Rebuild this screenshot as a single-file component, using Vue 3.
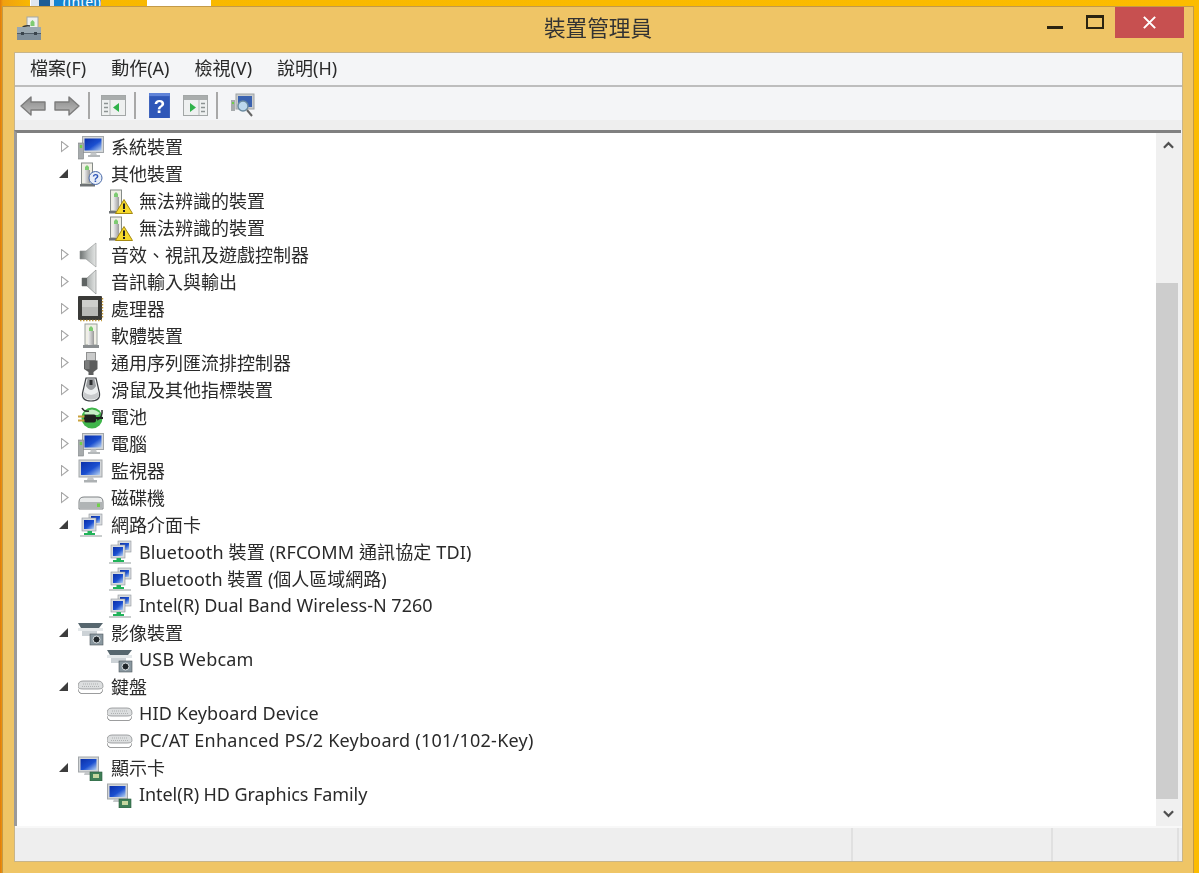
<template>
  <div class="desktop">
    <div class="thumb thumb-a"><span class="thumb-icon"></span><span class="thumb-blue">(Intel)</span></div>
    <div class="thumb thumb-b"></div>

    <svg class="defs" width="0" height="0" aria-hidden="true">
      <defs>
        <linearGradient id="screen" x1="0" y1="0" x2="1" y2="1">
          <stop offset="0" stop-color="#0a2fa8" />
          <stop offset="0.55" stop-color="#1b4fd0" />
          <stop offset="1" stop-color="#b9d4f2" />
        </linearGradient>
        <linearGradient id="metal" x1="0" y1="0" x2="1" y2="0">
          <stop offset="0" stop-color="#f2f2f2" />
          <stop offset="1" stop-color="#9a9a9a" />
        </linearGradient>
        <linearGradient id="cone" x1="0" y1="0" x2="1" y2="0">
          <stop offset="0" stop-color="#6f7473" />
          <stop offset="0.5" stop-color="#b5b9b8" />
          <stop offset="1" stop-color="#e4e6e5" />
        </linearGradient>
        <linearGradient id="arrow-fill" x1="0" y1="0" x2="0" y2="1">
          <stop offset="0" stop-color="#8a8a8a" />
          <stop offset="1" stop-color="#bdbdbd" />
        </linearGradient>
        <symbol id="i-monitor" viewBox="0 0 26 26">
          <rect x="1" y="2" width="23" height="17" fill="#d3d6d8" stroke="#a3a7aa" />
          <rect x="3" y="4" width="19" height="13" fill="url(#screen)" />
          <path d="M10 19h5l1 3H9z" fill="#c4c7c9" />
          <rect x="6" y="22" width="13" height="2.500" fill="#adb1b3" />
        </symbol>
        <symbol id="i-computer" viewBox="0 0 26 26">
          <rect x="4.500" y="2.500" width="21" height="16" fill="#d3d6d8" stroke="#a3a7aa" />
          <rect x="6.500" y="4.500" width="17" height="12" fill="url(#screen)" />
          <path d="M13 18.500h5l1 3h-7z" fill="#c4c7c9" />
          <rect x="10" y="21" width="12" height="2" fill="#b4b8ba" />
          <rect x="0.500" y="9" width="5" height="16" fill="#a7abad" stroke="#7c8082" stroke-width=".6" />
          <rect x="1.800" y="11" width="2.400" height="3" fill="#6fd04a" />
        </symbol>
        <symbol id="i-card" viewBox="0 0 26 26">
          <rect x="7" y="1" width="12" height="21" fill="#f0efe6" stroke="#9aa09c" />
          <path d="M11 5l2-2 2 2v3h-4z" fill="#7ecb72" />
          <rect x="10" y="8" width="6" height="14" fill="url(#metal)" />
          <rect x="5" y="22" width="16" height="3" fill="#8a8e90" />
        </symbol>
        <symbol id="i-unknown" viewBox="0 0 26 26">
          <rect x="3.500" y="2" width="11" height="21" fill="#f0efe6" stroke="#858b87" />
          <path d="M7 6l2-2 2 2v3H7z" fill="#7ecb72" />
          <rect x="6" y="9" width="6" height="13" fill="url(#metal)" />
          <rect x="2" y="23" width="15" height="2.500" fill="#6f7375" />
          <circle cx="17.500" cy="17" r="6.500" fill="#e8eef8" stroke="#4a6aa8" />
          <text x="17.500" y="21" text-anchor="middle" class="q">?</text>
        </symbol>
        <symbol id="i-warning" viewBox="0 0 26 26">
          <rect x="3.500" y="2" width="11" height="21" fill="#f0efe6" stroke="#858b87" />
          <path d="M7 6l2-2 2 2v3H7z" fill="#7ecb72" />
          <rect x="6" y="9" width="6" height="13" fill="url(#metal)" />
          <rect x="2" y="23" width="11" height="2.500" fill="#6f7375" />
          <path d="M17 11.500l8.500 14h-17z" fill="#f6d92c" stroke="#a58a12" />
          <rect x="16" y="15.500" width="2" height="5.500" fill="#222" />
          <rect x="16" y="22" width="2" height="2" fill="#222" />
        </symbol>
        <symbol id="i-speaker" viewBox="0 0 26 26">
          <path d="M2 9h6l10-8v24L8 17H2z" fill="url(#cone)" stroke="#8e9292" stroke-width=".6" />
        </symbol>
        <symbol id="i-speaker2" viewBox="0 0 26 26">
          <path d="M4 9h5l9-8v24l-9-8H4z" fill="url(#cone)" stroke="#7d8181" stroke-width=".6" />
          <rect x="4" y="9" width="5" height="8" fill="#5f6463" />
        </symbol>
        <symbol id="i-cpu" viewBox="0 0 26 26">
          <rect x="0" y="0" width="24" height="24" rx="1" fill="#3a3a38" />
          <rect x="4" y="4" width="16" height="16" fill="#b8b9b7" />
          <rect x="4" y="4" width="16" height="7" fill="#cdcecc" />
          <path d="M24.500 2v21M2 24.500h22" stroke="#c2993a" stroke-dasharray="1.500 1.500" stroke-width="1.400" />
        </symbol>
        <symbol id="i-usb" viewBox="0 0 26 26">
          <rect x="8.500" y="2.500" width="9" height="8" fill="#c9caca" stroke="#8f9090" />
          <path d="M6 10.500h13.500V19l-4 3v3h-5v-3L6 19z" fill="#5c5d5d" />
          <path d="M7 10.500h4.500V19H7z" fill="#7b7c7c" />
        </symbol>
        <symbol id="i-mouse" viewBox="0 0 26 26">
          <path d="M8 1h10l3.500 15q1 8-8.500 8-9.500 0-8.500-8z" fill="#eef0f1" stroke="#3d4044" stroke-width="1.200" />
          <path d="M9.500 2h7l1.500 7q-5 8-10 0z" fill="#9a9da0" />
          <rect x="11.500" y="3" width="3" height="5" fill="#2d2f31" />
          <path d="M6 15q7 6 14 0l1 5q-8 5-16 0z" fill="#c9cbcd" />
        </symbol>
        <symbol id="i-battery" viewBox="0 0 26 26">
          <circle cx="14" cy="14" r="10.500" fill="#3fb54a" />
          <path d="M6 9q8-7 16 0l-2 2H8z" fill="#c6eec6" />
          <path d="M4 4q2 4 7 3M24 6q1 7-5 10" stroke="#2d2f2d" stroke-width="1.500" fill="none" />
          <rect x="6" y="10.500" width="12" height="8" rx="2" fill="#1f211f" />
          <path d="M0 12.500h6.500M0 16.500h6.500" stroke="#c9a23c" stroke-width="1.800" />
          <path d="M18 14h7" stroke="#1f211f" stroke-width="2" />
        </symbol>
        <symbol id="i-disk" viewBox="0 0 26 26">
          <path d="M1 17q0-5 5-5h14q5 0 5 5v7H1z" fill="#e9ebeb" stroke="#7e8284" />
          <rect x="1.500" y="17" width="23" height="6.500" fill="#b0b4b5" />
          <rect x="19" y="18.500" width="3" height="3.500" fill="#6fd04a" />
        </symbol>
        <symbol id="i-network" viewBox="0 0 26 26">
          <rect x="11" y="2" width="13" height="11" fill="#d7dbde" stroke="#8f9499" stroke-width=".6" />
          <rect x="13" y="4" width="9" height="7" fill="url(#screen)" />
          <rect x="4" y="6" width="14" height="13" fill="#d7dbde" stroke="#8f9499" stroke-width=".6" />
          <rect x="6" y="8" width="10" height="9" fill="url(#screen)" />
          <rect x="9.500" y="19" width="4.500" height="3" fill="#22b35a" />
          <rect x="6" y="21" width="11" height="2" fill="#22b35a" />
          <rect x="2" y="23" width="22" height="2" fill="#c9cdcd" />
        </symbol>
        <symbol id="i-camera" viewBox="0 0 26 26">
          <path d="M0 3h25l-4 5H3z" fill="#56666e" />
          <rect x="0" y="8" width="25" height="3" fill="#e4e8ea" />
          <path d="M4 11h15v5H4z" fill="#ccd2d6" />
          <rect x="12" y="14" width="13" height="11" fill="#8a98a0" stroke="#4e585d" stroke-width=".6" />
          <circle cx="18.500" cy="19.500" r="3.500" fill="#20262a" stroke="#dbe1e4" />
        </symbol>
        <symbol id="i-keyboard" viewBox="0 0 26 26">
          <path d="M5 7h15q5 0 5 5.500 0 2.500-5 2.500H5q-5 0-5-2.500Q0 7 5 7z" fill="#dcdedf" stroke="#8b8e8f" stroke-width=".8" />
          <path d="M0 14.500q1 5 5 5h15q4 0 5-5v1.500q-1 4-5 4H5q-4 0-5-4z" fill="#3b3d3e" />
          <path d="M5 10h15M4 12.500h17" stroke="#aeb1b2" stroke-dasharray="1 1" />
        </symbol>
        <symbol id="i-display" viewBox="0 0 26 26">
          <rect x="0.500" y="2" width="20" height="15" fill="#d3d6d8" stroke="#a3a7aa" />
          <rect x="2.500" y="4" width="16" height="11" fill="url(#screen)" />
          <path d="M7 17h6l1 3H6z" fill="#c4c7c9" />
          <rect x="12" y="17" width="12" height="9" fill="#3f7f57" stroke="#2a5a3c" stroke-width=".6" />
          <rect x="15" y="19" width="6" height="4" fill="#c5d7a0" />
        </symbol>
      </defs>
    </svg>

    <div class="window">
      <header class="titlebar">
        <svg class="app-icon" viewBox="0 0 26 26" aria-hidden="true">
          <rect x="11" y="1" width="11" height="14" fill="#eef0ee" stroke="#a3a8a5" />
          <path d="M14.500 6l2-2 2 2v4h-4z" fill="#7ecb72" />
          <path d="M5 13q3-4 9-3" stroke="#32383c" stroke-width="1.400" fill="none" />
          <rect x="1" y="11" width="24" height="13" fill="#7f8e99" />
          <rect x="1" y="11" width="24" height="6" fill="#9aa8b0" />
          <rect x="1" y="17" width="24" height="1" fill="#4f5c66" />
          <rect x="5" y="16" width="3" height="3" fill="#39444c" />
          <rect x="18" y="16" width="3" height="3" fill="#39444c" />
        </svg>
        <div class="title">裝置管理員</div>
        <div class="winbtns">
          <span class="btn-min"></span>
          <span class="btn-max"></span>
          <span class="btn-close">
            <svg viewBox="0 0 16 16" aria-hidden="true"><path d="M2 2l12 12M14 2L2 14" /></svg>
          </span>
        </div>
      </header>

      <div class="client">
        <nav class="menubar">
          <span v-for="m in menus" :key="m" class="menu-item">{{ m }}</span>
        </nav>

        <div class="toolbar">
          <svg class="tool tool-arrow" viewBox="0 0 26 22" aria-hidden="true"><path d="M1 11L11 2v5h14v8H11v5z" fill="url(#arrow-fill)" stroke="#7c7c7c" stroke-width="1.400" stroke-linejoin="round" /></svg>
          <svg class="tool tool-arrow" viewBox="0 0 26 22" aria-hidden="true"><path d="M25 11L15 2v5H1v8h14v5z" fill="url(#arrow-fill)" stroke="#7c7c7c" stroke-width="1.400" stroke-linejoin="round" /></svg>
          <span class="sep"></span>
          <svg class="tool tool-panel" viewBox="0 0 25 21" aria-hidden="true">
            <rect x=".5" y=".5" width="24" height="20" fill="#eef0f0" stroke="#a3a7a7" />
            <rect x="1" y="1" width="23" height="4" fill="#a9adad" />
            <path d="M3 8.500h4M3 12.500h4M3 16.500h4" stroke="#8d9393" stroke-width="1.600" />
            <path d="M9 5v15" stroke="#b5b9b9" />
            <path d="M18 8v9l-6-4.500z" fill="#2fb24a" />
          </svg>
          <span class="sep"></span>
          <svg class="tool tool-help" viewBox="0 0 20 24" aria-hidden="true">
            <rect width="20" height="24" fill="#2f57b8" />
            <rect width="20" height="3" fill="#5f83d8" />
            <text x="10" y="19" text-anchor="middle" class="help-q">?</text>
          </svg>
          <svg class="tool tool-panel" viewBox="0 0 25 21" aria-hidden="true">
            <rect x=".5" y=".5" width="24" height="20" fill="#eef0f0" stroke="#a3a7a7" />
            <rect x="1" y="1" width="23" height="4" fill="#a9adad" />
            <path d="M18 8.500h4M18 12.500h4M18 16.500h4" stroke="#8d9393" stroke-width="1.600" />
            <path d="M16 5v15" stroke="#b5b9b9" />
            <path d="M7 8v9l6-4.500z" fill="#2fb24a" />
          </svg>
          <span class="sep"></span>
          <svg class="tool tool-scan" viewBox="0 0 25 25" aria-hidden="true">
            <rect x="6" y="1" width="18" height="15" fill="#c9cccd" stroke="#9ea3a6" />
            <rect x="8" y="3" width="14" height="11" fill="#3a62b0" />
            <rect x="1" y="7" width="4" height="11" fill="#a7abad" />
            <rect x="2" y="9" width="2" height="2" fill="#6fd04a" />
            <circle cx="13" cy="13" r="5" fill="#bcd8ee" stroke="#6a8aa0" stroke-width="1.400" />
            <path d="M17 17l5 6" stroke="#666" stroke-width="2" />
          </svg>
        </div>
        <div class="strip"></div>

        <div class="tree-frame">
          <ul class="tree">
            <li v-for="(r, i) in rows" :key="i" class="row" :class="{ child: r.child }">
              <span v-if="!r.child" class="expander" :class="r.open ? 'open' : 'closed'"></span>
              <svg class="row-icon" aria-hidden="true"><use :href="'#i-' + r.icon" /></svg>
              <span class="label" :style="{ letterSpacing: r.track }">{{ r.text }}</span>
            </li>
          </ul>
          <div class="scrollbar">
            <span class="arrow">
              <svg viewBox="0 0 12 8" aria-hidden="true"><path d="M1 7l5-5 5 5" /></svg>
            </span>
            <div class="track"><div class="thumb-bar"></div></div>
            <span class="arrow">
              <svg viewBox="0 0 12 8" aria-hidden="true"><path d="M1 1l5 5 5-5" /></svg>
            </span>
          </div>
        </div>

        <footer class="statusbar">
          <span class="cell cell-main"></span>
          <span class="cell cell-mid"></span>
          <span class="cell cell-end"></span>
        </footer>
      </div>
    </div>
  </div>
</template>

<script setup>
const menus = ['檔案(F)', '動作(A)', '檢視(V)', '說明(H)']

// track: 西文字寬和原圖的字型不同，個別列補一點字距
const rows = [
  { text: '系統裝置', icon: 'computer' },
  { text: '其他裝置', icon: 'unknown', open: true },
  { text: '無法辨識的裝置', icon: 'warning', child: true },
  { text: '無法辨識的裝置', icon: 'warning', child: true },
  { text: '音效、視訊及遊戲控制器', icon: 'speaker' },
  { text: '音訊輸入與輸出', icon: 'speaker2' },
  { text: '處理器', icon: 'cpu' },
  { text: '軟體裝置', icon: 'card' },
  { text: '通用序列匯流排控制器', icon: 'usb' },
  { text: '滑鼠及其他指標裝置', icon: 'mouse' },
  { text: '電池', icon: 'battery' },
  { text: '電腦', icon: 'computer' },
  { text: '監視器', icon: 'monitor' },
  { text: '磁碟機', icon: 'disk' },
  { text: '網路介面卡', icon: 'network', open: true },
  { text: 'Bluetooth 裝置 (RFCOMM 通訊協定 TDI)', icon: 'network', child: true, track: '0.13px' },
  { text: 'Bluetooth 裝置 (個人區域網路)', icon: 'network', child: true },
  { text: 'Intel(R) Dual Band Wireless-N 7260', icon: 'network', child: true },
  { text: '影像裝置', icon: 'camera', open: true },
  { text: 'USB Webcam', icon: 'camera', child: true, track: '0.2px' },
  { text: '鍵盤', icon: 'keyboard', open: true },
  { text: 'HID Keyboard Device', icon: 'keyboard', child: true, track: '0.1px' },
  { text: 'PC/AT Enhanced PS/2 Keyboard (101/102-Key)', icon: 'keyboard', child: true, track: '0.24px' },
  { text: '顯示卡', icon: 'display', open: true },
  { text: 'Intel(R) HD Graphics Family', icon: 'display', child: true, track: '-0.07px' }
]
</script>

<style>
html, body { margin: 0; padding: 0; background: #f5b400; }
</style>

<style scoped>
.desktop {
  position: relative;
  width: 1199px;
  height: 873px;
  overflow: hidden;
  box-sizing: border-box;
  padding: 6px 0 0 2px;
  background: linear-gradient(90deg, #e07a0c 0, #f0a010 3px, #f8b800 30px, #fcbc00 100%);
  font-family: "Noto Sans", "Noto Sans CJK TC", sans-serif;
  color: #2a2a2a;
}
.defs { position: absolute; }

/* 桌面上被視窗蓋住的縮圖 */
.thumb {
  position: absolute;
  top: 0;
  height: 6px;
  overflow: hidden;
}
.thumb-a {
  left: 30px;
  width: 71px;
  display: flex;
  background: #fff;
}
.thumb-icon {
  width: 24px;
  margin-left: 1px;
  background: linear-gradient(90deg, #dfe6ee 0, #dfe6ee 8px, #1d5d96 8px, #1d5d96 19px, #dfe6ee 19px);
}
.thumb-blue {
  flex: 1;
  background: #1784cf;
  color: #fff;
  font-size: 14px;
  line-height: 4px;
  padding-left: 9px;
  white-space: nowrap;
}
.thumb-b {
  left: 147px;
  width: 64px;
  background: #fff;
}

.window {
  width: 1192px;
  height: 867px;
  box-sizing: border-box;
  background: #efc566;
  border: 1px solid #c39a48;
  border-bottom: 0;
  display: flex;
  flex-direction: column;
  filter: blur(0.45px);
}

.titlebar {
  position: relative;
  height: 45px;
  flex: none;
  display: flex;
  align-items: center;
  padding-left: 13px;
}
.app-icon { width: 26px; height: 26px; margin-top: -1px; }
.title {
  position: absolute;
  left: 0;
  right: 0;
  top: 7px;
  text-align: center;
  font-size: 21.6px;
  line-height: 28px;
  color: #333;
}
.winbtns {
  position: absolute;
  top: 0;
  right: 9px;
  display: flex;
  align-items: flex-start;
}
.btn-min {
  width: 16px;
  height: 3px;
  margin-top: 19px;
  background: #2b2410;
}
.btn-max {
  width: 18px;
  height: 14px;
  box-sizing: border-box;
  margin: 8px 11px 0 23px;
  border: 2px solid #2b2410;
  border-top-width: 3px;
}
.btn-close {
  width: 69px;
  height: 31px;
  background: #c75050;
  display: grid;
  place-items: center;
}
.btn-close svg {
  width: 15px;
  height: 15px;
  fill: none;
  stroke: #fff;
  stroke-width: 2.2;
}

.client {
  flex: 1;
  margin: 0 10px 11px 11px;
  min-height: 0;
  display: flex;
  flex-direction: column;
  border: 1px solid #c8b58a;
  background: #f4f5f7;
}

.menubar {
  height: 34px;
  box-sizing: border-box;
  flex: none;
  display: flex;
  gap: 25px;
  align-items: center;
  padding: 0 0 4px 15px;
  font-size: 18px;
  border-bottom: 2px solid #bdbdbd;
}
.toolbar {
  height: 33px;
  box-sizing: border-box;
  flex: none;
  display: flex;
  align-items: center;
  padding: 4px 0 0 5px;
}
.tool { display: block; flex: none; }
.tool-arrow { width: 26px; height: 22px; margin-right: 8px; }
.tool-panel { width: 25px; height: 21px; }
.tool-help { width: 21px; height: 25px; margin-right: 13px; }
.tool-scan { width: 25px; height: 25px; margin-left: -1px; }
.help-q { fill: #fff; font: bold 18px "Liberation Sans", sans-serif; }
.q { fill: #2f57b8; font: bold 11px "Liberation Sans", sans-serif; }
.sep {
  width: 2px;
  height: 27px;
  margin: 0 12px 0 0;
  background: #a8a8a8;
}
.toolbar .tool-arrow + .sep { margin-left: 0; margin-right: 11px; }
.tool-panel + .sep { margin-left: 8px; margin-right: 13px; }

.strip {
  height: 10px;
  flex: none;
  background: #eeeeee;
}

.tree-frame {
  flex: 1;
  min-height: 0;
  display: flex;
  margin: 0 1px 0 -1px;
  background: #fff;
  border-top: 3px solid #808080;
  border-left: 3px solid #9a9a9a;
}
.tree {
  flex: 1;
  min-width: 0;
  list-style: none;
  margin: 0;
  padding: 0;
}
.row {
  height: 27px;
  display: flex;
  align-items: center;
  padding-left: 44px;
  font-size: 18px;
  white-space: nowrap;
}
.row.child { padding-left: 90px; }
.expander {
  flex: none;
  width: 8px;
  margin-right: 9px;
}
.expander.closed {
  position: relative;
  height: 12px;
  background: #a6a6a6;
  clip-path: polygon(0 0, 100% 50%, 0 100%);
}
.expander.closed::after {
  content: "";
  position: absolute;
  left: 1px;
  top: 2px;
  width: 5px;
  height: 8px;
  background: #fff;
  clip-path: polygon(0 0, 100% 50%, 0 100%);
}
.expander.open {
  width: 9px;
  height: 9px;
  margin: 0 10px 0 -2px;
  background: #3d3d3d;
  clip-path: polygon(100% 0, 100% 100%, 0 100%);
}
.row-icon {
  width: 26px;
  height: 26px;
  flex: none;
  margin-right: 7px;
}
.row.child .row-icon { margin-right: 6px; }
.label { margin-top: -2px; }

.scrollbar {
  width: 25px;
  flex: none;
  display: flex;
  flex-direction: column;
  background: #f0f0f0;
}
.arrow {
  height: 24px;
  flex: none;
  display: grid;
  place-items: center;
}
.arrow svg {
  width: 11px;
  height: 8px;
  fill: none;
  stroke: #505050;
  stroke-width: 2.4;
}
.track {
  flex: 1;
  min-height: 0;
  display: flex;
  flex-direction: column;
  justify-content: flex-end;
  padding-bottom: 3px;
}
.thumb-bar {
  height: 516px;
  margin-right: 3px;
  background: #cdcdcd;
}

.statusbar {
  height: 33px;
  flex: none;
  display: flex;
  background: #eeeeee;
  border-top: 2px solid #f8f8f8;
  box-sizing: content-box;
}
.cell { box-sizing: border-box; border-right: 2px solid #e0e0e0; }
.cell-main { width: 838px; }
.cell-mid { width: 200px; }
.cell-end { flex: 1; margin-right: 3px; }
</style>
